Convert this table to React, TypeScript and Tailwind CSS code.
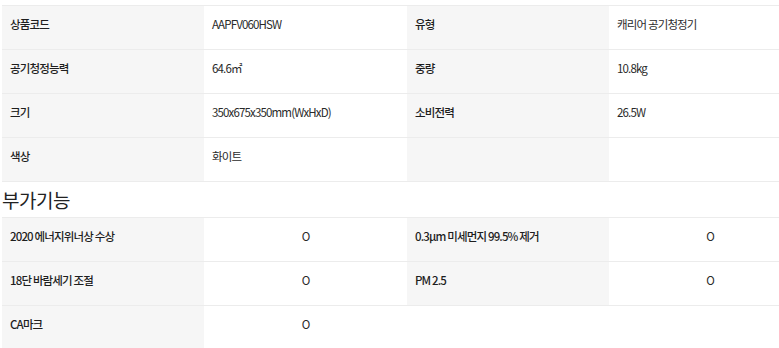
const specs: [string, string, string, string][] = [
  ["상품코드", "AAPFV060HSW", "유형", "캐리어 공기청정기"],
  ["공기청정능력", "64.6㎡", "중량", "10.8kg"],
  ["크기", "350x675x350mm(WxHxD)", "소비전력", "26.5W"],
  ["색상", "화이트", "", ""],
];

const extras: [string, string, string, string][] = [
  ["2020 에너지위너상 수상", "O", "0.3μm 미세먼지 99.5% 제거", "O"],
  ["18단 바람세기 조절", "O", "PM 2.5", "O"],
];

const font = { fontFamily: '"Noto Sans CJK KR", "Noto Sans", sans-serif' };

const row =
  "grid grid-cols-[202px_203px_202px_202px] h-[44px] text-[11.5px] leading-[16px] tracking-[-0.85px] text-[#2a2a2a]";
const label = "bg-[#f6f6f6] pl-2 pt-[10px] font-medium text-[#1e1e1e]";

function SpecTable() {
  return (
    <div className="border-t border-[#ececec]">
      {specs.map((r, i) => (
        <div key={i} className={`${row} border-b border-[#ececec]`}>
          <div className={label}>{r[0]}</div>
          <div className="pl-2 pt-[10px]">{r[1]}</div>
          <div className={label}>{r[2]}</div>
          <div className="pl-2 pt-[10px]">{r[3]}</div>
        </div>
      ))}
    </div>
  );
}

function ExtraTable() {
  return (
    <div className="border-t border-[#ececec]">
      {extras.map((r, i) => (
        <div key={i} className={`${row} border-b border-[#ececec]`}>
          <div className={label}>{r[0]}</div>
          <div className="pt-[10px] text-center">{r[1]}</div>
          <div className={label}>{r[2]}</div>
          <div className="pt-[10px] text-center">{r[3]}</div>
        </div>
      ))}
      <div className={row}>
        <div className={label}>CA마크</div>
        <div className="pt-[10px] text-center">O</div>
        <div />
        <div />
      </div>
    </div>
  );
}

export default function App() {
  return (
    <div className="w-[779px] h-[348px] overflow-hidden bg-white pl-[2px] pt-[5px]" style={font}>
      <div className="w-[809px]">
        <SpecTable />
        <h3 className="text-[19px] leading-[34px] text-[#222] tracking-[-0.5px] pt-[1px]">부가기능</h3>
        <ExtraTable />
      </div>
    </div>
  );
}
